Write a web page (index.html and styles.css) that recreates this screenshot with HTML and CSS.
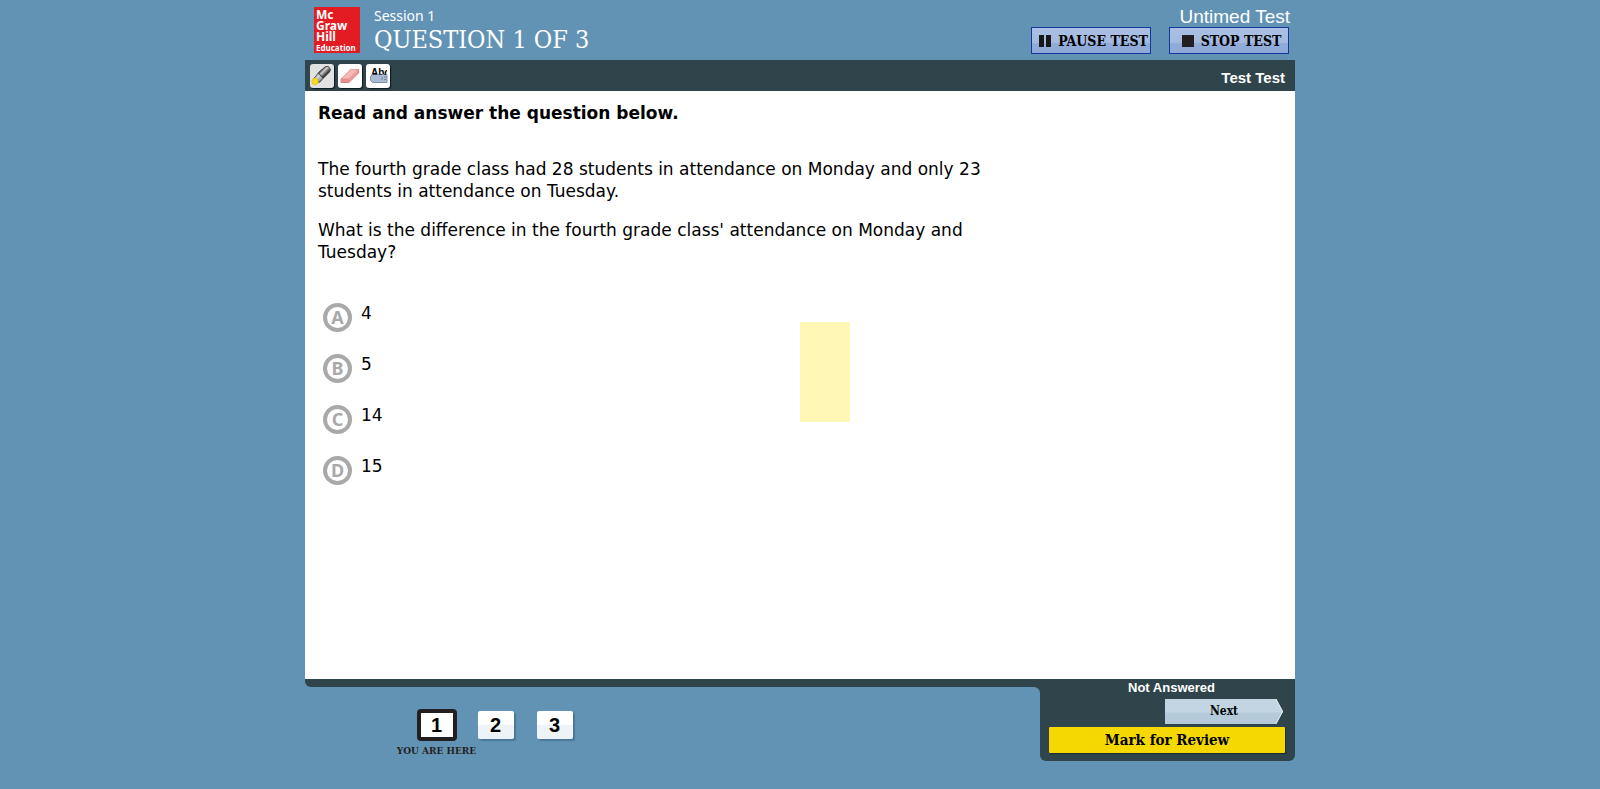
FILE: index.html
```html
<!DOCTYPE html>
<html lang="en">
<head>
<meta charset="utf-8">
<meta name="viewport" content="width=device-width, initial-scale=1">
<title>Session 1 - Question 1 of 3</title>
<link rel="stylesheet" href="styles.css">
</head>
<body>
<div class="app">
  <header class="header">
    <div class="logo"><span>Mc</span><span>Graw</span><span>Hill</span><span class="logo-small">Education</span></div>
    <div class="titles">
      <div class="session">Session 1</div>
      <h1 class="title">QUESTION 1 OF 3</h1>
    </div>
    <div class="controls">
      <div class="timer">Untimed Test</div>
      <div class="control-row">
        <button class="control" type="button">
          <svg width="12" height="12" viewBox="0 0 12 12" aria-hidden="true"><path d="M0 0h5v12H0zM7 0h5v12H7z" fill="#1a1718"/></svg>PAUSE TEST</button>
        <button class="control" type="button">
          <svg width="12" height="12" viewBox="0 0 12 12" aria-hidden="true"><path d="M0 0h12v12H0z" fill="#231f20"/></svg>STOP TEST</button>
      </div>
    </div>
  </header>

  <div class="toolbar">
    <button class="tool tool-active" type="button" aria-label="Highlighter">
      <svg width="24" height="24" viewBox="0 0 24 24">
        <defs><linearGradient id="pen" gradientUnits="userSpaceOnUse" x1="10" y1="6" x2="16" y2="12"><stop offset="0" stop-color="#111"/><stop offset=".4" stop-color="#d0d0d0"/><stop offset=".6" stop-color="#888"/><stop offset="1" stop-color="#111"/></linearGradient></defs>
        <path d="M9 8 15.500 2.500 18.500 2.500 20.500 5.500 19.500 8 12.500 15 10 18 5.500 18.500 3.500 15z" fill="url(#pen)" stroke="#333" stroke-width=".8"/>
        <path d="M8.500 9 13 14 10 17.500 6 18 4 14.500z" fill="#d8d8d8" fill-opacity=".6"/>
        <path d="M8.500 9 13 14" stroke="#333"/>
        <circle cx="5" cy="17.500" r="3.200" fill="#f8dc20" stroke="#d7b500" stroke-width=".5"/>
      </svg>
    </button>
    <button class="tool" type="button" aria-label="Eraser">
      <svg width="24" height="24" viewBox="0 0 24 24">
        <path d="M3 15 12.500 5.500H20.500V9L11 18.500H3z" fill="#e58f8f" stroke="#d28484"/>
        <path d="M3.500 14.500 12.500 5.500h7.500L11 14.500z" fill="#f8b9b6"/>
        <path d="M11 14.500v3.500L20 9V5.500z" fill="#ed9d9b"/>
      </svg>
    </button>
    <button class="tool" type="button" aria-label="Option eliminator">
      <svg width="24" height="24" viewBox="0 0 24 24">
        <svg x="5" y="3" width="16" height="9"><text x="0" y="9" class="tool-text">Abc</text></svg>
        <path d="M4.500 12.500 6.500 10.500h14.500v8H6.500l-2-2z" fill="#a9bad4" stroke="#8090aa"/>
        <path d="M7 10.500h4m2 0h3m2 0h2" stroke="#3a4352"/>
        <path d="M16 13v3M18 13h2M18 15.500h2" stroke="#7686a2"/>
      </svg>
    </button>
    <div class="student">Test Test</div>
  </div>

  <main class="question">
    <h2 class="instruction">Read and answer the question below.</h2>
    <div class="stem">
      <p>The fourth grade class had 28 students in attendance on Monday and only 23 students in attendance on Tuesday.</p>
      <p>What is the difference in the fourth grade class' attendance on Monday and Tuesday?</p>
    </div>
    <div class="options" role="radiogroup" aria-label="Answers">
      <label class="option"><input class="radio" type="radio" name="answer"><span class="letter">A</span><span>4</span></label>
      <label class="option"><input class="radio" type="radio" name="answer"><span class="letter">B</span><span>5</span></label>
      <label class="option"><input class="radio" type="radio" name="answer"><span class="letter">C</span><span>14</span></label>
      <label class="option"><input class="radio" type="radio" name="answer"><span class="letter">D</span><span>15</span></label>
    </div>
    <div class="highlight"></div>
  </main>

  <footer class="footer">
    <div class="footer-left">
      <div class="strip"></div>
      <div class="corner">
        <nav class="pages" aria-label="Questions">
          <div class="page-item">
            <button class="page page-current" type="button" aria-current="page">1</button>
            <span class="here">YOU ARE HERE</span>
          </div>
          <div class="page-item"><button class="page" type="button">2</button></div>
          <div class="page-item"><button class="page" type="button">3</button></div>
        </nav>
      </div>
    </div>
    <div class="panel">
      <div class="status">Not Answered</div>
      <button class="next" type="button">
        <svg class="next-shape" viewBox="0 0 118 25" preserveAspectRatio="none" aria-hidden="true">
          <path d="M0 0h111l7 12.500L111 25H0z" fill="#b4cadb"/>
          <path d="M0 0h111l7 12.500v1H0z" fill="#c3d5e2"/>
          <path d="M111 0l6.500 12.500L111 25" fill="none" stroke="#e4edf3"/>
        </svg>
        <span class="next-label">Next</span>
      </button>
      <button class="review" type="button">Mark for Review</button>
    </div>
  </footer>
</div>
</body>
</html>
```
FILE: styles.css
```css
* { box-sizing: border-box; }

body {
  margin: 0;
  background: #6293b5;
  color: #000;
  font-family: Verdana, "DejaVu Sans", sans-serif;
  font-size: 17px;
  line-height: 22px;
}

button {
  margin: 0;
  padding: 0;
  border: 0;
  color: #000;
  cursor: pointer;
}

.app {
  display: flex;
  flex-direction: column;
  max-width: 990px;
  min-height: 100vh;
  margin: 0 auto;
  padding-bottom: 28px;
}

.header {
  display: flex;
  align-items: flex-start;
  height: 60px;
  padding: 7px 5px 0 9px;
  color: #fff;
}

.logo {
  display: flex;
  flex-direction: column;
  width: 46px;
  height: 46px;
  padding: 2px;
  background: #e31b23;
  font: bold 12px/11px "Noto Sans", sans-serif;
}

.logo-small { font-size: 8px; line-height: 11px; }

.titles { margin-left: 14px; }

.session { font: 14px/18px "Noto Sans", sans-serif; }

.title {
  margin: 0;
  font: 25px/30px "DejaVu Serif Condensed", "DejaVu Serif", serif;
}

.controls {
  margin-left: auto;
  text-align: right;
}

.timer { font: 19px/20px "Liberation Sans", Arial, sans-serif; }

.control-row {
  display: flex;
  gap: 18px;
  padding-right: 1px;
}

.control {
  display: flex;
  align-items: center;
  justify-content: center;
  gap: 7px;
  width: 120px;
  height: 27px;
  padding-left: 5px;
  border: 1px solid #14389b;
  background: linear-gradient(#abc0e4, #a3b9e0 60%, #90acdb 60%, #8ea9d8);
  font: bold 14px/20px "DejaVu Serif Condensed", "DejaVu Serif", serif;
  white-space: nowrap;
}

.toolbar {
  display: flex;
  align-items: center;
  gap: 4px;
  height: 31px;
  padding: 1px 10px 0 5px;
  background: #2f454b;
}

.tool {
  display: flex;
  align-items: center;
  justify-content: center;
  width: 24px;
  height: 24px;
  border-radius: 3px;
  background: #fff;
  box-shadow: 1px 1px 1px #10191c;
}

.tool-active { background: #e2e2e2; }

.tool-text { font: bold 10px "Liberation Sans", Arial, sans-serif; }

.student {
  margin-left: auto;
  padding-top: 3px;
  color: #fff;
  font: bold 15px/20px "Liberation Sans", Arial, sans-serif;
}

.question {
  position: relative;
  flex: 1;
  padding: 11px 13px;
  background: #fff;
}

.instruction {
  margin: 0;
  font-size: 17px;
}

.stem {
  max-width: 670px;
  padding-top: 34px;
}

.stem p { margin: 0 0 17px; }

.options {
  display: flex;
  flex-direction: column;
  align-items: flex-start;
  gap: 22px;
  padding: 23px 0 0 5px;
}

.option {
  display: grid;
  grid-template-columns: 29px auto;
  column-gap: 9px;
  height: 29px;
  line-height: 20px;
}

.radio,
.letter {
  grid-area: 1 / 1;
  width: 29px;
  height: 29px;
}

.radio {
  margin: 0;
  border: 4px solid #a9a9a9;
  border-radius: 50%;
  appearance: none;
}

.letter {
  color: #a9a9a9;
  font: bold 18px/29px "Noto Sans", sans-serif;
  text-align: center;
  pointer-events: none;
}

.highlight {
  position: absolute;
  top: 231px;
  left: 50%;
  width: 50px;
  height: 100px;
  background: #fff7b5;
}

.footer { display: flex; }

.footer-left { flex: 1; }

.strip {
  height: 8px;
  border-radius: 0 0 0 6px;
  background: #2f454b;
}

.corner { background: linear-gradient(#2f454b, #2f454b) top right / 8px 8px no-repeat; }

.pages {
  display: flex;
  align-items: flex-start;
  padding: 22px 0 0 102px;
  border-radius: 0 6px 0 0;
  background: #6293b5;
}

.page-item {
  display: flex;
  flex-direction: column;
  align-items: center;
  width: 59px;
}

.page {
  width: 36px;
  height: 28px;
  margin-top: 2px;
  border-radius: 2px;
  background: linear-gradient(#fff 50%, #edf3f6 50%);
  box-shadow: 2px 2px 1px #4b7897;
  font: bold 20px/28px "Liberation Sans", Arial, sans-serif;
}

.page-current {
  width: 40px;
  height: 32px;
  margin-top: 0;
  border: 4px solid #231f20;
  border-radius: 4px;
  background: #fff;
  box-shadow: none;
  line-height: 24px;
}

.here {
  color: #231f20;
  font: bold 10px/20px "DejaVu Serif Condensed", "DejaVu Serif", serif;
  white-space: nowrap;
}

.panel {
  display: flex;
  flex-direction: column;
  width: 255px;
  padding: 0 10px 8px 9px;
  border-radius: 0 0 6px 6px;
  background: #2f454b;
}

.status {
  padding: 0 0 2px 9px;
  color: #fff;
  font: bold 13px/18px "Liberation Sans", Arial, sans-serif;
  text-align: center;
}

.next {
  display: grid;
  align-self: flex-end;
  width: 118px;
  height: 25px;
  margin-right: 2px;
  background: none;
  font: bold 12px/25px "DejaVu Serif Condensed", "DejaVu Serif", serif;
}

.next-shape,
.next-label { grid-area: 1 / 1; }

.next-shape {
  width: 118px;
  height: 25px;
}

.review {
  height: 26px;
  margin-top: 3px;
  border-radius: 1px;
  background: #f5d800;
  box-shadow: 1px 1px 1px #1c2b30;
  font: bold 15px/26px "DejaVu Serif Condensed", "DejaVu Serif", serif;
}
```
